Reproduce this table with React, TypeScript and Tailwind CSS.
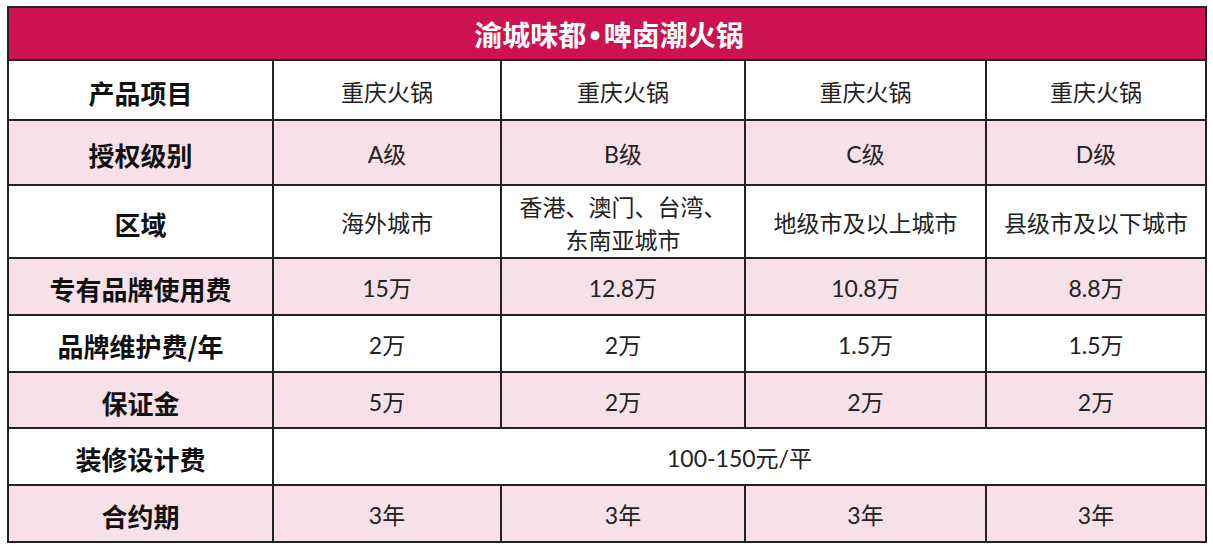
import React from 'react';

type Row = {
  label: string;
  cells: React.ReactNode[];
  h: string;
  pink?: boolean;
  span?: boolean;
};

const rows: Row[] = [
  { label: '产品项目', cells: ['重庆火锅', '重庆火锅', '重庆火锅', '重庆火锅'], h: 'h-[60px]' },
  { label: '授权级别', cells: ['A级', 'B级', 'C级', 'D级'], h: 'h-[65px]', pink: true },
  {
    label: '区域',
    cells: [
      '海外城市',
      <span className="leading-[33px]">香港、澳门、台湾、<br />东南亚城市</span>,
      '地级市及以上城市',
      '县级市及以下城市',
    ],
    h: 'h-[73px]',
  },
  { label: '专有品牌使用费', cells: ['15万', '12.8万', '10.8万', '8.8万'], h: 'h-[57px]', pink: true },
  { label: '品牌维护费/年', cells: ['2万', '2万', '1.5万', '1.5万'], h: 'h-[57px]' },
  { label: '保证金', cells: ['5万', '2万', '2万', '2万'], h: 'h-[56px]', pink: true },
  { label: '装修设计费', cells: ['100-150元/平'], h: 'h-[57px]', span: true },
  { label: '合约期', cells: ['3年', '3年', '3年', '3年'], h: 'h-[57px]', pink: true },
];

export default function App() {
  return (
    <div className="w-[1213px] h-[546px] bg-white pt-[6px] pl-[7px] font-['Lato','Noto_Sans_CJK_SC',sans-serif]">
      <div className="grid w-[1200px] grid-cols-[265px_228px_244px_241px_220px] border-l-2 border-t-2 border-[#222]">
        {/* title band */}
        <div className="col-span-5 flex h-[53px] items-center justify-center border-b-2 border-r-2 border-[#222] bg-[#cc1250] pl-[4px] font-['Noto_Sans_CJK_SC',sans-serif] text-[28px] font-bold text-white">
          渝城味都<span className="px-[3px] font-['Lato',sans-serif] text-[20px]">•</span>啤卤潮火锅
        </div>

        {rows.map((row, i) => (
          <React.Fragment key={i}>
            <div
              className={`flex items-center justify-center border-b-2 border-r-2 border-[#222] pt-[4px] font-['Noto_Sans_CJK_SC',sans-serif] text-[26px] font-bold text-[#111] ${row.h} ${row.pink ? 'bg-[#f8e0e8]' : 'bg-white'}`}
            >
              {row.label}
            </div>
            {row.cells.map((c, j) => (
              <div
                key={j}
                className={`flex items-center justify-center border-b-2 border-r-2 border-[#222] pt-[4px] text-center text-[23px] text-[#222] ${row.h} ${row.pink ? 'bg-[#f8e0e8]' : 'bg-white'} ${row.span ? 'col-span-4' : ''}`}
              >
                {c}
              </div>
            ))}
          </React.Fragment>
        ))}
      </div>
    </div>
  );
}
